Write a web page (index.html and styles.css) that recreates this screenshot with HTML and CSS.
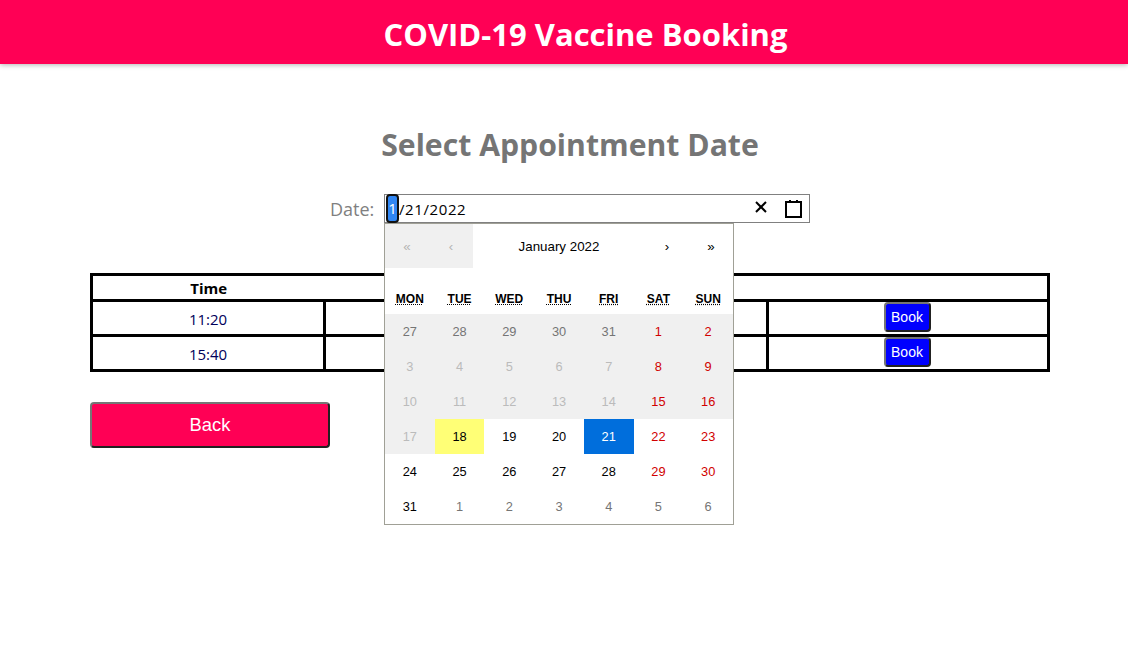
FILE: index.html
```html
<!DOCTYPE html>
<html lang="en">
<head>
    <meta charset="UTF-8">
    <title>COVID-19 Vaccine Booking</title>
    <link rel="stylesheet" href="styles.css">
</head>
<body>
    <header class="topbar">
        <h1>COVID-19 Vaccine Booking</h1>
    </header>

    <main class="content">
        <h2 class="page-title">Select Appointment Date</h2>

        <div class="date-row">
            <label class="date-label">Date:</label>
            <div class="date-picker">
                <div class="date-field">
                    <span class="date-value"><span class="date-month">1</span>/21/2022</span>
                    <button type="button" class="icon-btn">
                        <svg width="19" height="19" viewBox="0 0 19 19" stroke="#000" stroke-width="2"><line x1="3" y1="3" x2="13" y2="13"/><line x1="13" y1="3" x2="3" y2="13"/></svg>
                    </button>
                    <button type="button" class="icon-btn">
                        <svg width="19" height="19" viewBox="0 0 19 19" stroke="#000" stroke-width="2" fill="none"><rect x="2" y="3" width="15" height="15"/><line x1="6" y1="1" x2="6" y2="4"/><line x1="13" y1="1" x2="13" y2="4"/></svg>
                    </button>
                </div>

                <div class="calendar">
                    <div class="cal-nav">
                        <button type="button" class="cal-arrow off">«</button>
                        <button type="button" class="cal-arrow off">‹</button>
                        <button type="button" class="cal-label">January 2022</button>
                        <button type="button" class="cal-arrow">›</button>
                        <button type="button" class="cal-arrow">»</button>
                    </div>
                    <div class="cal-weekdays">
                        <abbr>Mon</abbr><abbr>Tue</abbr><abbr>Wed</abbr><abbr>Thu</abbr><abbr>Fri</abbr><abbr>Sat</abbr><abbr>Sun</abbr>
                    </div>
                    <div class="cal-days">
                        <button class="day off other">27</button>
                        <button class="day off other">28</button>
                        <button class="day off other">29</button>
                        <button class="day off other">30</button>
                        <button class="day off other">31</button>
                        <button class="day off weekend">1</button>
                        <button class="day off weekend">2</button>

                        <button class="day off past">3</button>
                        <button class="day off past">4</button>
                        <button class="day off past">5</button>
                        <button class="day off past">6</button>
                        <button class="day off past">7</button>
                        <button class="day off weekend">8</button>
                        <button class="day off weekend">9</button>

                        <button class="day off past">10</button>
                        <button class="day off past">11</button>
                        <button class="day off past">12</button>
                        <button class="day off past">13</button>
                        <button class="day off past">14</button>
                        <button class="day off weekend">15</button>
                        <button class="day off weekend">16</button>

                        <button class="day off past">17</button>
                        <button class="day today">18</button>
                        <button class="day">19</button>
                        <button class="day">20</button>
                        <button class="day active">21</button>
                        <button class="day weekend">22</button>
                        <button class="day weekend">23</button>

                        <button class="day">24</button>
                        <button class="day">25</button>
                        <button class="day">26</button>
                        <button class="day">27</button>
                        <button class="day">28</button>
                        <button class="day weekend">29</button>
                        <button class="day weekend">30</button>

                        <button class="day">31</button>
                        <button class="day other">1</button>
                        <button class="day other">2</button>
                        <button class="day other">3</button>
                        <button class="day other">4</button>
                        <button class="day other">5</button>
                        <button class="day other">6</button>
                    </div>
                </div>
            </div>
        </div>

        <table class="slots">
            <tr>
                <th class="col-time">Time</th>
                <th></th>
                <th class="col-book"></th>
            </tr>
            <tr>
                <td>11:20</td>
                <td></td>
                <td class="book-cell"><button type="button" class="book-btn">Book</button></td>
            </tr>
            <tr>
                <td>15:40</td>
                <td></td>
                <td class="book-cell"><button type="button" class="book-btn">Book</button></td>
            </tr>
        </table>

        <button type="button" class="back-btn">Back</button>
    </main>
</body>
</html>
```

FILE: styles.css
```css
* {
    box-sizing: border-box;
}

body {
    margin: 0;
    min-height: 645px;
    background-color: #fff;
    font-family: 'Open Sans', 'Noto Sans', sans-serif;
}

.topbar {
    height: 64px;
    padding-left: 43px;
    padding-top: 3px;
    display: flex;
    justify-content: center;
    align-items: center;
    background-color: #ff0055;
    box-shadow: 0 1px 5px rgba(0, 0, 0, 0.3);
}

.topbar h1 {
    margin: 0;
    color: #fff;
    font-size: 31px;
    font-weight: 700;
}

.content {
    width: 960px;
    height: 581px;
    margin-left: 90px;
    padding-top: 60px;
}

.page-title {
    margin: 0;
    height: 42px;
    line-height: 42px;
    text-align: center;
    color: #757575;
    font-size: 30.2px;
    font-weight: 700;
}

.date-row {
    margin-top: 28px;
    display: flex;
    justify-content: center;
    align-items: center;
    gap: 10px;
}

.date-label {
    width: 44px;
    text-align: right;
    white-space: nowrap;
    color: #808080;
    font-size: 18px;
}

.date-picker {
    position: relative;
    width: 426px;
}

.date-field {
    height: 29px;
    display: flex;
    align-items: center;
    border: 1px solid #808080;
    padding-left: 1px;
    font-size: 15px;
    color: #000;
}

.date-value {
    flex: 1;
    display: flex;
    align-items: center;
    letter-spacing: 0.6px;
}

.date-month {
    width: 13px;
    height: 29px;
    margin: -1px 0;
    line-height: 25px;
    letter-spacing: 0;
    text-align: center;
    color: #fff;
    background-color: #3086f3;
    border: 2px solid #111;
    border-radius: 4px;
}

.icon-btn {
    width: 31px;
    height: 27px;
    padding: 0;
    border: none;
    background: none;
    display: flex;
    justify-content: center;
    align-items: center;
}

.calendar {
    position: absolute;
    top: 29px;
    left: 0;
    width: 350px;
    height: 302px;
    background-color: #fff;
    border: 1px solid #a0a096;
    font-family: 'Liberation Sans', Arial, sans-serif;
}

.cal-nav {
    height: 44px;
    display: flex;
    margin-bottom: 16px;
}

.cal-nav button {
    border: none;
    background: none;
    padding: 0;
    color: #000;
    font-family: inherit;
    font-size: 13.33px;
}

.cal-arrow {
    width: 44px;
}

.cal-nav .cal-arrow.off {
    background-color: #f0f0f0;
    color: #b5b5b5;
}

.cal-label {
    flex: 1;
}

.cal-weekdays {
    height: 30px;
    display: grid;
    grid-template-columns: repeat(7, 1fr);
    align-items: center;
    text-align: center;
    text-transform: uppercase;
    font-size: 12px;
    font-weight: 700;
}

.cal-weekdays abbr {
    text-decoration: underline dotted;
}

.cal-days {
    display: grid;
    grid-template-columns: repeat(7, 1fr);
    grid-auto-rows: 35px;
}

.day {
    border: none;
    background: none;
    padding: 0;
    color: #000;
    font-family: inherit;
    font-size: 12.8px;
}

.day.other {
    color: #757575;
}

.day.off {
    background-color: #f0f0f0;
}

.day.past {
    color: #bbb;
}

.day.weekend {
    color: #d10000;
}

.day.today {
    background-color: #ffff76;
}

.day.active {
    background-color: #006edc;
    color: #fff;
}

.slots {
    width: 960px;
    margin-top: 50px;
    border-collapse: collapse;
    border: 3px solid #000;
    table-layout: fixed;
}

.slots th {
    height: 26px;
    padding: 0;
    color: #000;
    font-size: 15px;
    font-weight: 700;
    border-bottom: 3px solid #000;
}

.col-time {
    width: 233px;
}

.col-book {
    width: 281px;
}

.slots td {
    height: 35px;
    padding: 1px 0 0;
    text-align: center;
    color: #00005a;
    font-size: 15px;
    border: 3px solid #000;
}

.slots .book-cell {
    padding: 0 2px 0 0;
}

.book-btn {
    width: 47px;
    height: 30px;
    padding: 1px 0 0;
    display: block;
    margin: -3px auto 0;
    color: #fff;
    background-color: #0000ff;
    border: 2px outset #767676;
    border-radius: 4px;
    font-family: 'Liberation Sans', Arial, sans-serif;
    font-size: 14px;
}

.back-btn {
    display: block;
    width: 240px;
    height: 46px;
    margin-top: 30px;
    color: #fff;
    background-color: #ff0055;
    border: 2px outset #767676;
    border-radius: 4px;
    font-family: 'Liberation Sans', Arial, sans-serif;
    font-size: 18.4px;
}
```
